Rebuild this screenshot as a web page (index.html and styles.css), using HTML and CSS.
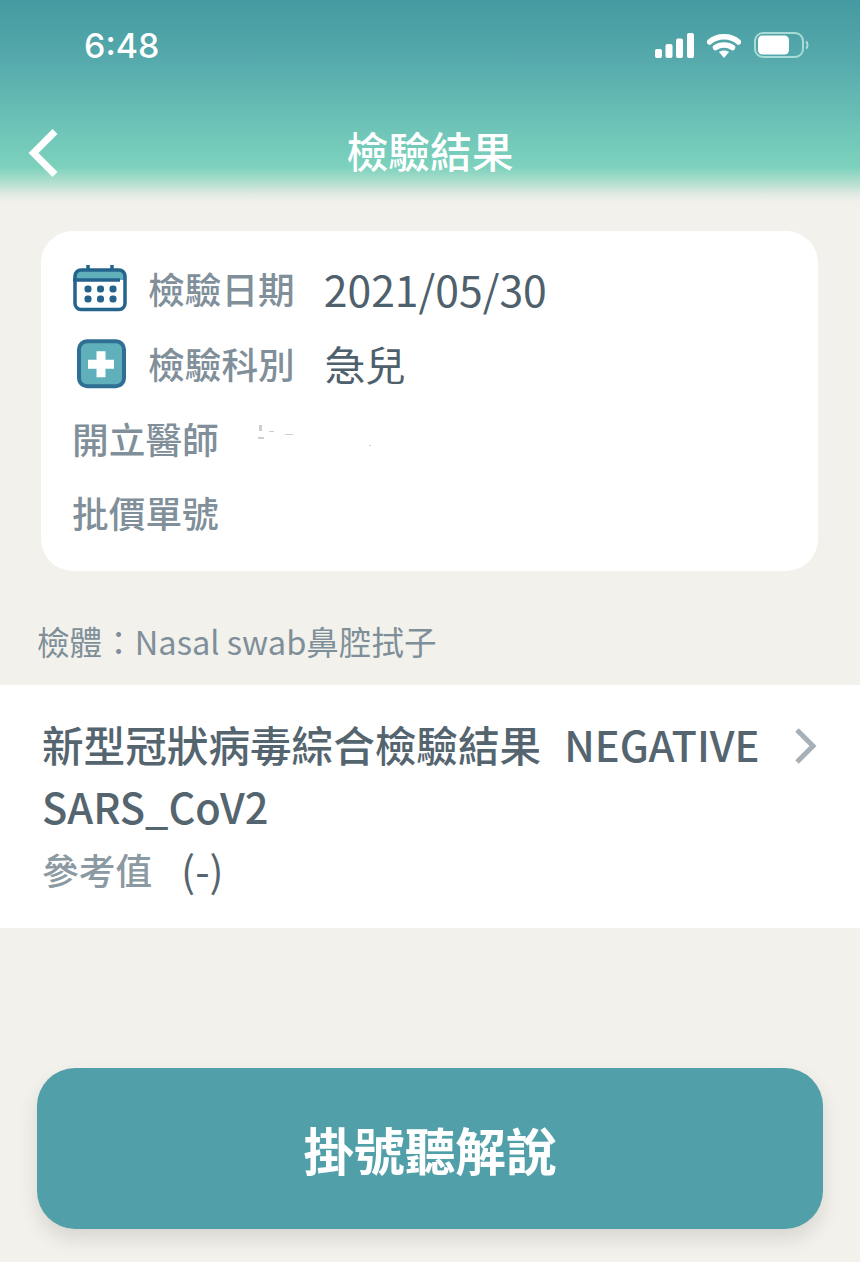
FILE: index.html
```html
<!DOCTYPE html>
<html lang="zh-Hant">
<head>
<meta charset="utf-8">
<title>檢驗結果</title>
<link rel="stylesheet" href="styles.css">
</head>
<body>
<div class="page">
  <header class="header">
    <div class="status">
      <span class="time">6:48</span>
      <div class="status-icons">
        <svg class="i-signal" width="39" height="25" viewBox="0 0 39 25"><rect x="0" y="16" width="7" height="9" rx="2"/><rect x="10.500" y="11" width="7" height="14" rx="2"/><rect x="21" y="5.500" width="7" height="19.500" rx="2"/><rect x="32" y="0" width="7" height="25" rx="2"/></svg>
        <svg class="i-wifi" width="34" height="25" viewBox="0 0 34 25"><path d="M2.500 9C10.500 2 23.500 2 31.500 9"/><path d="M8.500 14.500C13 11 21 11 25.500 14.500"/><path class="wedge" d="M12 19C15 17 19 17 22 19L17 25Z"/></svg>
        <svg class="i-batt" width="55" height="26" viewBox="0 0 55 26"><rect class="shell" x="1" y="1" width="48" height="24" rx="8"/><rect class="fill" x="4" y="3.500" width="31" height="19" rx="4.500"/><path class="cap" d="M52 9.500C54 10.500 54 15.500 52 16.500"/></svg>
      </div>
    </div>
    <div class="nav">
      <svg class="back" width="32" height="50" viewBox="0 0 32 50"><path d="M27 2.500L5.500 24L27 45.500"/></svg>
      <h1 class="title">檢驗結果</h1>
    </div>
  </header>

  <main class="content">
    <section class="card">
      <div class="row">
        <svg class="row-icon" width="54" height="52" viewBox="0 0 54 52">
          <path class="cal-top" d="M2 15V10Q2 4 8 4H46Q52 4 52 10V15Z"/>
          <rect class="outline" x="2" y="5" width="50" height="39.500" rx="6"/>
          <path class="outline" d="M0 15H47M15 0V5M39 0V5"/>
          <g class="dots"><rect x="11.500" y="20.500" width="7" height="7" rx="3"/><rect x="24" y="20.500" width="7" height="7" rx="3"/><rect x="36.500" y="20.500" width="7" height="7" rx="3"/><rect x="11.500" y="30.500" width="7" height="7" rx="3"/><rect x="24" y="30.500" width="7" height="7" rx="3"/><rect x="36.500" y="30.500" width="7" height="7" rx="3"/></g>
        </svg>
        <span class="label">檢驗日期</span>
        <span class="value date">2021/05/30</span>
      </div>
      <div class="row">
        <svg class="row-icon" width="54" height="56" viewBox="0 0 54 56">
          <rect class="med" x="6" y="3.300" width="45" height="45" rx="8"/>
          <path class="plus" d="M28 13.300V39.300M15 26.300H41"/>
        </svg>
        <span class="label">檢驗科別</span>
        <span class="value dept">急兒</span>
      </div>
      <div class="row plain">
        <span class="label">開立醫師</span>
        <svg class="specks" width="120" height="30" viewBox="0 0 120 30"><g><rect x="8" y="2" width="3" height="6"/><rect x="7" y="14" width="6" height="2"/><rect x="18" y="8" width="5" height="1"/><rect x="34" y="11" width="8" height="1"/><rect x="118" y="22" width="2" height="1"/></g></svg>
      </div>
      <div class="row plain"><span class="label">批價單號</span></div>
    </section>

    <p class="specimen">檢體：Nasal swab鼻腔拭子</p>

    <section class="result">
      <div class="result-line">
        <span class="result-name">新型冠狀病毒綜合檢驗結果</span>
        <span class="result-value">NEGATIVE</span>
        <svg class="chev" width="24" height="38" viewBox="0 0 24 38"><path d="M3 3L19 19L3 35"/></svg>
      </div>
      <div class="result-code">SARS_CoV2</div>
      <div class="result-ref"><span class="ref-label">參考值</span><span class="ref-value">(-)</span></div>
    </section>

    <button class="cta" type="button">掛號聽解說</button>
  </main>
</div>
</body>
</html>
```
FILE: styles.css
```css
* { box-sizing: border-box; }
html, body { margin: 0; padding: 0; }
body {
  width: 860px;
  height: 1262px;
  overflow: hidden;
  background: #f2f1ec;
  font-family: "Noto Sans CJK TC", "Noto Sans", sans-serif;
}
.page { display: flex; flex-direction: column; height: 1262px; }

.header {
  height: 202px;
  flex: none;
  padding: 25px 0 0;
  color: #fff;
  background: linear-gradient(180deg, #459aa1 0%, #56aaac 30%, #6bc1b6 60%, #7dd2bd 83%, #a8dccb 89%, #dfe9e2 96%, #f2f1ec 100%);
}
.status {
  display: flex;
  align-items: center;
  justify-content: space-between;
  height: 42px;
  padding: 0 51px 0 84px;
}
.time { font-family: Inter, sans-serif; font-size: 34px; font-weight: 500; line-height: 42px; }
.status-icons { display: flex; align-items: center; gap: 13px; margin-top: -2px; }
.i-signal { fill: #fff; }
.i-wifi path { fill: none; stroke: #fff; stroke-width: 5.500; stroke-linecap: round; }
.i-wifi .wedge { fill: #fff; stroke: none; }
.i-batt .shell { fill: none; stroke: #a9dcd8; stroke-width: 2; }
.i-batt .fill { fill: #fff; }
.i-batt .cap { fill: none; stroke: #a9dcd8; stroke-width: 2; }

.nav {
  position: relative;
  display: flex;
  align-items: center;
  justify-content: center;
  height: 60px;
  margin-top: 53px;
}
.back { position: absolute; left: 28px; top: 9px; fill: none; stroke: #fff; stroke-width: 7; }
.title {
  margin: 0;
  font-size: 41.800px;
  font-weight: 500;
  line-height: 60px;
}

.content { flex: 1; display: flex; flex-direction: column; }

.card {
  margin: 29px 42px 0 41px;
  height: 340px;
  padding: 20px 32px 0;
  background: #fff;
  border-radius: 32px;
  display: flex;
  flex-direction: column;
}
.row { display: flex; align-items: center; height: 74.700px; }
.row.plain .label { margin-left: -1px; }
.row-icon { flex: none; margin: 6px 21px 0 0; }
.label { font-size: 36.700px; color: #808f99; font-weight: 500; white-space: nowrap; }
.value { color: #4f606d; }
.date { margin-left: 29px; font-size: 42.700px; }
.dept { margin-left: 30px; font-size: 40.500px; }
.cal-top { fill: #5fb0ba; }
.outline { fill: none; stroke: #24648c; stroke-width: 3.500; }
.dots { fill: #24648c; }
.med { fill: #5fb0ba; stroke: #2f6f93; stroke-width: 4; }
.plus { fill: none; stroke: #fff; stroke-width: 9; stroke-linejoin: round; }
.specks { margin-left: 32px; flex: none; fill: #c9cfd3; }

.specimen {
  margin: 46px 0 0 37px;
  font-size: 32.600px;
  line-height: 48px;
  color: #7f8f99;
}

.result {
  margin-top: 20px;
  height: 243px;
  padding: 28px 42px 0;
  background: #fff;
  color: #55656f;
}
.result-line { display: flex; align-items: center; height: 62px; }
.result-name { font-size: 41.600px; line-height: 62px; font-weight: 500; }
.result-value { margin-left: 23px; font-size: 41.600px; font-weight: 500; line-height: 62px; }
.chev { margin: 3px 0 0 auto; fill: none; stroke: #a6b0b6; stroke-width: 5; }
.result-code { font-size: 41.600px; font-weight: 500; line-height: 62px; }
.result-ref { display: flex; align-items: center; height: 64px; }
.ref-label { font-size: 36.700px; font-weight: 500; color: #8b99a2; }
.ref-value { margin-left: 29px; font-size: 41.600px; }

.cta {
  display: block;
  margin: 140px 37px 0;
  width: 786px;
  height: 161px;
  border: 0;
  padding: 0;
  border-radius: 38px;
  background: #519fa8;
  color: #fff;
  font-family: "Noto Sans CJK TC", sans-serif;
  font-size: 50.600px;
  font-weight: 700;
  box-shadow: 0 10px 18px rgba(80, 80, 70, 0.16);
}
```
